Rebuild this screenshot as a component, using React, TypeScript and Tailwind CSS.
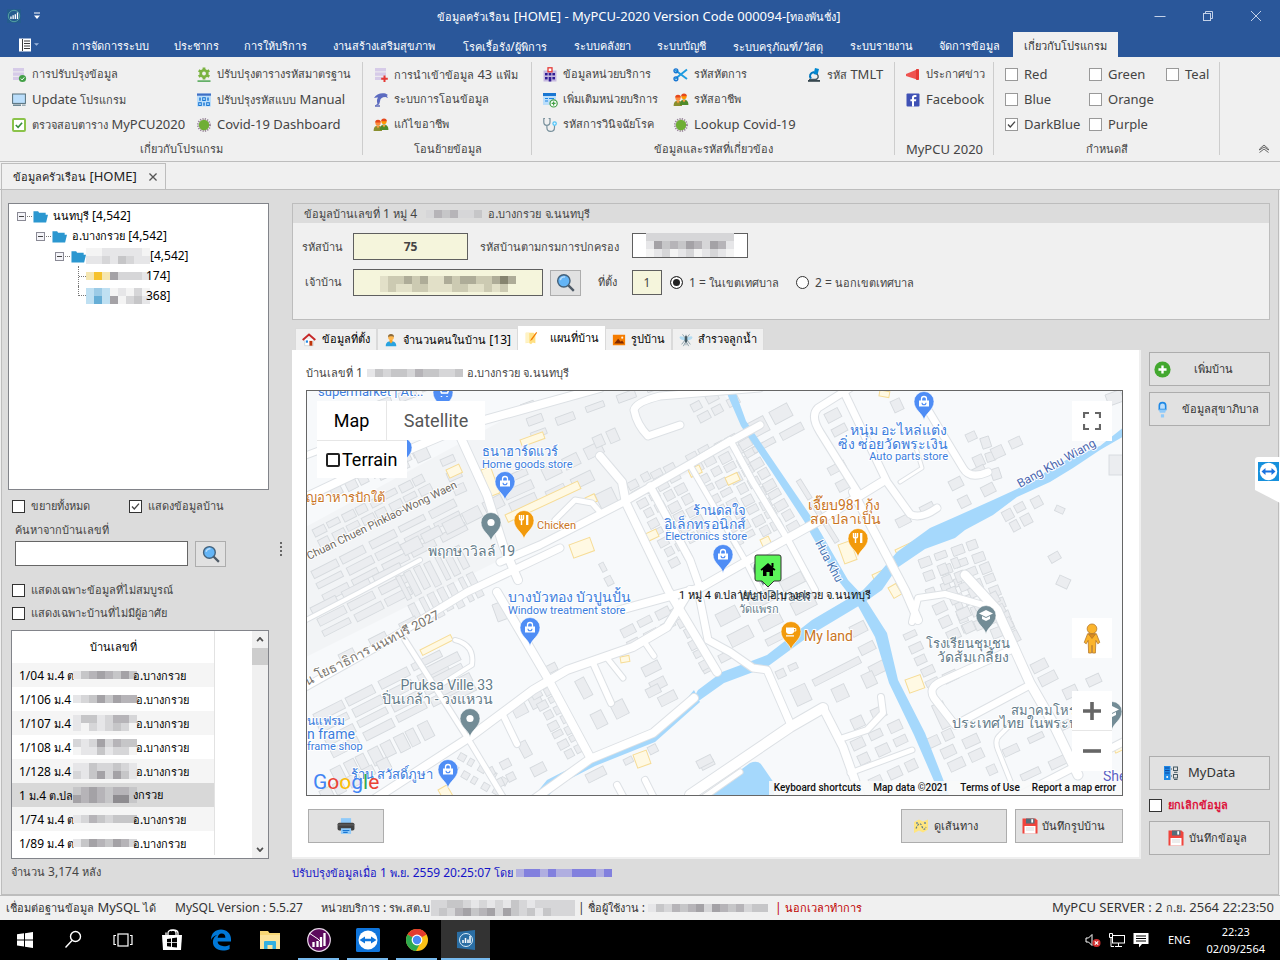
import React from "react";

type Kids = { children?: React.ReactNode };

/* ---------- small building blocks ---------- */

/* Mixed Thai and Latin text: Latin runs are set one step larger than the Thai around them. */
function T({ s, big }: { s: string; big?: boolean }) {
  return (
    <span className="whitespace-pre">
      {s.split(/([^\u0E00-\u0E7F]+)/).map((part, i) =>
        i % 2 ? <span key={i} className={big ? "text-[13px]" : "text-[12px]"}>{part}</span> : part,
      )}
    </span>
  );
}

function Mosaic({ rows, cell = 8, label }: { rows: string[]; cell?: number; label?: string }) {
  const palette: Record<string, string> = {
    a: "#f4f4f4", b: "#e6e6e8", c: "#d6d6d8", d: "#c6c6c8", e: "#b6b4b8", f: "#a4a2a6", g: "#8e8c90",
    y: "#f6c22c", z: "#f5e6b0", s: "#bfe0f2", t: "#66aed6", u: "#9ccbe6",
    k: "#e2e0c8", l: "#cccab2", m: "#aeac98", n: "#86846f",
    p: "#cfcde6", q: "#b0aee0", r: "#8280de",
  };
  const w = rows[0].length * cell;
  const h = rows.length * cell;
  return (
    <svg width={w} height={h} className="block shrink-0" role="img" aria-label={label ?? "hidden"} shapeRendering="crispEdges">
      {rows.flatMap((r, j) =>
        r.split("").map((c, i) =>
          palette[c] ? <rect key={`${i}-${j}`} x={i * cell} y={j * cell} width={cell} height={cell} fill={palette[c]} /> : null,
        ),
      )}
    </svg>
  );
}

function Check({ text, checked, big, border = "border-[#333]", className = "" }: { text: string; checked?: boolean; big?: boolean; border?: string; className?: string }) {
  return (
    <label className={`flex items-center gap-[6px] whitespace-nowrap ${className}`}>
      <span className="relative size-[13px] shrink-0">
        <input type="checkbox" defaultChecked={checked} className={`peer block size-[13px] appearance-none border bg-white ${border}`} />
        <svg viewBox="0 0 13 13" className="pointer-events-none absolute inset-0 hidden size-[13px] peer-checked:block">
          <path d="M3 6.5 5.3 9 10 3.6" fill="none" stroke="#444" strokeWidth="1.3" />
        </svg>
      </span>
      <T s={text} big={big} />
    </label>
  );
}

/* ---------- icons, 16 unit grid ---------- */

function Ico({ children, size = "size-4" }: Kids & { size?: string }) {
  return <svg viewBox="0 0 16 16" className={`${size} shrink-0`} aria-hidden="true">{children}</svg>;
}
const Rows = () => (
  <g fill="#d6cbe8"><rect x="2" y="1" width="11" height="3.4" /><rect x="2" y="5.4" width="11" height="3.4" /><rect x="2" y="9.8" width="11" height="3.2" /></g>
);
const Gear = ({ fill = "#7cb342" }: { fill?: string }) => (
  <g>
    <g stroke={fill} strokeWidth="2.8">
      <path d="M8 0.4V12.6M2.7 3.4l10.6 6.200M13.300 3.4l-10.600 6.200" />
    </g>
    <circle cx="8" cy="6.5" r="4.6" fill={fill} />
    <circle cx="8" cy="6.5" r="1.9" fill="#f0f0f0" />
  </g>
);
const icons = {
  rowsOk: <><Rows /><circle cx="11.5" cy="11.5" r="3.6" fill="#43a047" /><path d="M9.8 11.6l1.3 1.3 2.2-2.5" stroke="#fff" fill="none" /></>,
  rowsAdd: <><Rows /><path d="M11.5 8.5v6.6M8.2 11.8h6.6" stroke="#e53935" strokeWidth="2" /></>,
  monitor: <><rect x="1.6" y="2" width="12.8" height="9.4" fill="#bbdefb" stroke="#546e7a" /><path d="M2 13.2h8" stroke="#607d8b" strokeWidth="1.4" /><path d="M11 13.2h3.6" stroke="#90a4ae" strokeWidth="1.4" /></>,
  checkGreen: <><rect x="2" y="2" width="12" height="12" rx="1" fill="#fff" stroke="#8bc34a" strokeWidth="2" /><path d="M4.8 8l2.3 2.3 4-4.6" fill="none" stroke="#388e3c" strokeWidth="1.6" /></>,
  gear: <><Gear /><rect x="1.5" y="13.4" width="13" height="1.4" fill="#43a047" /></>,
  binary: <><rect x="1" y="1.5" width="14" height="13" fill="#bbdefb" /><rect x="1" y="1.5" width="14" height="2.2" fill="#3f6fc4" /><path d="M4 5.4v3.4M12 5.4v3.4M8 10.4v3.4" stroke="#1976d2" strokeWidth="1.4" /><rect x="6.7" y="5.7" width="2.6" height="2.8" fill="none" stroke="#1976d2" /><rect x="2.7" y="10.7" width="2.6" height="2.8" fill="none" stroke="#1976d2" /><rect x="10.7" y="10.7" width="2.6" height="2.8" fill="none" stroke="#1976d2" /></>,
  virus: <><circle cx="8" cy="8" r="6" fill="none" stroke="#9a869c" strokeWidth="2" strokeDasharray="1.2 1.16" /><circle cx="8" cy="8" r="5.200" fill="#6fae35" /></>,
  dolphin: <><path d="M1 6C3 2 8 .5 12.5 1.5L15 3l-1.2.8L15 6l-2.6-1C9 5 7 6.500 7 9.500l-1 3-4 1.200 2.400-2C3.600 9 4 7 5 5.600 3.600 5.400 2.200 5.600 1 6z" fill="#5c6bc0" /><path d="M2 14h5" stroke="#3949ab" strokeWidth="1.2" /></>,
  people: <><path d="M.6 14c0-4 2-5.600 4.400-5.600S9 10 9 14z" fill="#8a8f2e" /><path d="M7 13c0-4 1.800-5.400 4-5.400s4.400 1.400 4.400 5.400z" fill="#4e8a2a" /><circle cx="5" cy="5.900" r="2.600" fill="#ff8a3c" /><path d="M2.200 5.600a2.800 2.800 0 0 1 5.600 0z" fill="#e5481d" /><circle cx="11" cy="4.600" r="2.600" fill="#ff9800" /><path d="M8.200 4.200a2.800 2.800 0 0 1 5.600 0z" fill="#e5481d" /><path d="M3.400 9l1.600 2.400L6.600 9z" fill="#ff9c40" /><path d="M9.400 8l1.600 2.400L12.600 8z" fill="#ff9c40" /></>,
  clinic: <><rect x="1.500" y="3.500" width="13" height="11" fill="#c5b8e0" /><rect x="6" y=".8" width="4" height="4" fill="#fff" stroke="#e53935" strokeWidth="1.300" /><g fill="#311b92"><rect x="3" y="6" width="2.600" height="2.400" /><rect x="6.700" y="6" width="2.600" height="2.400" /><rect x="10.400" y="6" width="2.600" height="2.400" /><rect x="3" y="10" width="2.600" height="2.400" /><rect x="6.700" y="10" width="2.600" height="4.500" /><rect x="10.400" y="10" width="2.600" height="2.400" /></g></>,
  formAdd: <><rect x="1" y="1" width="13" height="12" fill="#bbdefb" /><rect x="1" y="1" width="13" height="3" fill="#1976d2" /><path d="M3 6.500h3M3 9h3M7 6.500h5" stroke="#1e88e5" strokeWidth="1.200" /><circle cx="11.600" cy="11.400" r="3.600" fill="#fff" stroke="#43a047" strokeWidth="1.200" /><path d="M11.600 9.400v4M9.600 11.400h4" stroke="#43a047" strokeWidth="1.300" /></>,
  stetho: <><path d="M3 1.500H1.800V5c0 2 1.200 3.400 3 3.400S8 7 8 5V1.500H6.600M4.900 8.400v2.200c0 2.400 1.400 3.800 3.600 3.800s4-1.600 4-4V8.500" fill="none" stroke="#78909c" strokeWidth="1.200" /><circle cx="12.600" cy="6.600" r="1.700" fill="#e1f5fe" stroke="#4fc3f7" strokeWidth="1.200" /></>,
  scissors: <><path d="M2 12 14 2.500M2 3l12 9" stroke="#1e9be0" strokeWidth="1.900" /><circle cx="2.900" cy="3.800" r="1.900" fill="none" stroke="#1976d2" strokeWidth="1.400" /><circle cx="2.900" cy="11.800" r="1.900" fill="none" stroke="#1976d2" strokeWidth="1.400" /></>,
  scope: <><path d="M9 1l4 1-1.500 6-4-1z" fill="#0288d1" /><path d="M11 7c2 2 1.600 5-1.500 5.500M3 12.500h8" stroke="#455a64" strokeWidth="1.400" fill="none" /><rect x="2" y="13" width="12" height="1.800" fill="#37474f" /><path d="M8 5C4 6 3 9 5 11.500" fill="none" stroke="#0277bd" strokeWidth="2" /></>,
  horn: <><path d="M1 7 12 2.500v10L1 9z" fill="#ef5350" /><rect x="11" y="2" width="3" height="11" rx=".8" fill="#e53935" /></>,
  facebook: <><rect x="1.500" y="1.500" width="13" height="13" rx="1" fill="#3f51b5" /><path d="M9 14.500V9.300h2l.3-2H9V6c0-.7.300-1.100 1.200-1.100h1.200V3.100C11 3 10.400 3 9.800 3 8 3 7 4 7 5.800v1.500H5.400v2H7v5.200z" fill="#fff" /></>,
  house: <><path d="M3 7v7.500h10V7" fill="#fff" stroke="#cfd8dc" /><path d="M.8 8 8 1.800 15.200 8" fill="none" stroke="#c62828" strokeWidth="2.200" /><rect x="8.500" y="9" width="3.400" height="5.500" fill="#bf360c" /><rect x="4.400" y="8.500" width="2.400" height="2.600" fill="#1e88e5" /></>,
  person: <><circle cx="8" cy="5" r="3.200" fill="#ffb74d" /><path d="M4.600 5C4 0 12 0 11.400 5 10.500 3.400 6 3.400 4.600 5z" fill="#8a6a3c" /><path d="M2 15c0-4 2.500-5.500 6-5.500s6 1.500 6 5.500z" fill="#29a3e0" /><path d="M6.300 8h3.400v2L8 12l-1.700-2z" fill="#ffa726" /></>,
  note: <><path d="M2 2h9l2 2v10l-3-1-2 2-3-2-3 1z" fill="#ffe082" /><path d="M2 2h4v12l-2-1-2 1z" fill="#fff3c4" /><path d="M14 1 8 9l-1 2.500L9.400 10 15 2z" fill="#f57c00" /></>,
  photo: <><rect x="1" y="2" width="14" height="12" fill="#f57c00" /><path d="M2.500 12 7 6.500l3 3.500 1.500-1.500 2.500 3.500z" fill="#7f2a00" /><circle cx="11.700" cy="5.300" r="1.200" fill="#fff3e0" /></>,
  bug: <><ellipse cx="4" cy="6" rx="3.600" ry="1.800" fill="#b3dcf2" transform="rotate(25 4 6)" /><ellipse cx="12" cy="6" rx="3.600" ry="1.800" fill="#b3dcf2" transform="rotate(-25 12 6)" /><path d="M8 2v12M4 1.500l3 4M12 1.500l-3 4M3 13l4-5M13 13 9 8M5 15l2-4M11 15l-2-4" stroke="#78909c" strokeWidth=".9" /><ellipse cx="8" cy="7" rx="1.500" ry="4" fill="#455a64" /></>,
  search: <><path d="M10 10l5 5" stroke="#4e5a66" strokeWidth="2" /><circle cx="6.600" cy="6.600" r="5.200" fill="#64b5f6" stroke="#44617a" strokeWidth="1.200" /><path d="M3.600 6a3.400 3.400 0 0 1 4-2.600" stroke="#bbdefb" strokeWidth="1.200" fill="none" /></>,
  printer: <><rect x="3.500" y="1" width="9" height="5" fill="#90caf9" /><rect x=".5" y="5" width="15" height="7" rx="1.500" fill="#424242" /><path d="M1 7h14" stroke="#616161" /><rect x="3.500" y="10" width="9" height="5" fill="#90caf9" /><path d="M5 12h6M5.500 13.700h4" stroke="#1976d2" strokeWidth="1" /></>,
  route: <><path d="M1 4l5-2.500 4 2 5-2v10l-5 3-4-2-5 2.500z" fill="#ffe57f" /><path d="M3 10.500c3-7 5-5 6-2s3 4 4 .5" stroke="#607d8b" strokeWidth="1.200" fill="none" strokeDasharray="2 1.200" /><circle cx="4" cy="5" r="1" fill="#78909c" /><circle cx="12" cy="5" r="1.100" fill="#78909c" /></>,
  floppy: <><path d="M.5.5h13l2 2v13H.5z" fill="#f0443c" /><rect x="4" y=".5" width="8.500" height="5" fill="#546e7a" /><rect x="9.300" y="1.200" width="1.800" height="3.400" fill="#fff" /><rect x="2.500" y="8" width="11" height="7.500" fill="#fff" /><path d="M4 10h8M4 12h8" stroke="#cfcfcf" strokeWidth=".8" /></>,
  plus: <><circle cx="8" cy="8" r="7.600" fill="#43a82f" /><path d="M8 4.200v7.600M4.200 8h7.600" stroke="#fff" strokeWidth="2.200" /></>,
  tap: <><path d="M5 8V4.500a3 3 0 0 1 6 0V8z" fill="#bbdefb" stroke="#1e88e5" strokeWidth="1.500" /><path d="M4.500 8h7l-1 3h-5z" fill="#90caf9" /><rect x="6.500" y="12.500" width="3" height="3" fill="#90caf9" /></>,
  server: <><rect x="1" y="1" width="6.500" height="14" fill="#1e88e5" /><path d="M2 3h4.500M2 5.500h4.500M2 8h4.500" stroke="#0d47a1" strokeWidth="1.200" /><circle cx="4.200" cy="12" r="1" fill="#fff" /><g fill="none" stroke="#455a64"><rect x="10.500" y="2" width="4" height="3.500" /><rect x="10.500" y="9.500" width="4" height="3.500" /><path d="M8 4h1M8 11h1M11 7.300h3.500M11 14.500h3.500" /></g></>,
  folder: <><path d="M.5 2.500h5l1 1.500h7v2H16l-2 8.500H.5z" fill="#2b97d0" /></>,
  appChart: <><rect width="16" height="16" fill="#245c8e" /><circle cx="8" cy="8" r="6.500" fill="none" stroke="#5aa9a4" /><path d="M4.500 11.500V8.500M7 11.500V7M9.500 11.500V6M12 11.500V4" stroke="#fff" strokeWidth="1.500" /></>,
} as const;
type IconName = keyof typeof icons;

/* ---------- title and ribbon ---------- */

function TitleBar() {
  return (
    <header className="flex h-8 items-center bg-[#2a579a] text-white">
      <div className="flex w-[120px] items-center gap-2 pl-[7px]">
        <Ico size="size-[14px]">{icons.appChart}</Ico>
        <button aria-label="Customize" className="grid size-4 place-items-center">
          <svg viewBox="0 0 8 8" className="size-2"><path d="M1 1h6" stroke="#fff" /><path d="M1 3.500h6L4 7z" fill="#fff" /></svg>
        </button>
      </div>
      <h1 className="flex-1 pl-[22px] text-center text-[11px] leading-8"><T big s="ข้อมูลครัวเรือน [HOME] - MyPCU-2020 Version Code 000094-[ทองพันชั่ง]" /></h1>
      <div className="flex">
        {[
          ["Minimize", <path key="m" d="M.5 6.500h11" />],
          ["Restore", <g key="r"><rect x="1.500" y="3.500" width="7" height="7" /><path d="M3.500 3.500v-2h7v7h-2" /></g>],
          ["Close", <path key="c" d="M1 1l10 10M11 1 1 11" />],
        ].map(([n, g]) => (
          <button key={n as string} aria-label={n as string} className="grid h-8 w-12 place-items-center">
            <svg viewBox="0 0 12 12" className="size-3" fill="none" stroke="#c3d1e8">{g}</svg>
          </button>
        ))}
      </div>
    </header>
  );
}

const menu: [string, string][] = [
  ["การจัดการระบบ", "w-[101px]"],
  ["ประชากร", "w-[71px]"],
  ["การให้บริการ", "w-[87px]"],
  ["งานสร้างเสริมสุขภาพ", "w-[130px]"],
  ["โรคเรื้อรัง/ผู้พิการ", "w-[112px]"],
  ["ระบบคลังยา", "w-[83px]"],
  ["ระบบบัญชี", "w-[75px]"],
  ["ระบบครุภัณฑ์/วัสดุ", "w-[118px]"],
  ["ระบบรายงาน", "w-[88px]"],
  ["จัดการข้อมูล", "w-[88px]"],
  ["เกี่ยวกับโปรแกรม", "w-[105px]"],
];

function MenuTabs() {
  return (
    <nav className="flex h-[25px] bg-[#2a579a] text-[11px] text-white">
      <button aria-label="File" className="flex w-[60px] items-center gap-0.5 pl-[18px]">
        <svg viewBox="0 0 14 14" className="size-[14px]"><rect x="1" y=".5" width="12" height="13" fill="#fff" /><path d="M4.500 1v12M6 3h6M6 5.500h6M6 8h6M6 10.500h6" stroke="#3a3a3a" /></svg>
        <svg viewBox="0 0 6 4" className="h-1 w-[5px]"><path d="M0 0h6L3 3z" fill="#9db6dc" /></svg>
      </button>
      {menu.map(([t, w], i) => (
        <button key={t} className={`${w} pt-1 text-center whitespace-nowrap ${i === 10 ? "bg-[#f0f0f0] text-[#333]" : ""}`}><T s={t} /></button>
      ))}
    </nav>
  );
}

function RItem({ icon, text }: { icon: IconName; text: string }) {
  return (
    <button className="flex h-[25px] items-center gap-[5px] text-left whitespace-nowrap">
      <Ico>{icons[icon]}</Ico>
      <T big s={text} />
    </button>
  );
}
function RGroup({ title, width, pad, children }: Kids & { title: string; width: string; pad: string }) {
  return (
    <section className={`relative flex shrink-0 flex-col pt-[5px] ${width}`}>
      <div className={`flex h-[75px] ${pad}`}>{children}</div>
      <h2 className="h-6 text-center leading-6"><T big s={title} /></h2>
      <span className="absolute top-[5px] right-0 h-[93px] border-r border-[#cdcdcd]" />
    </section>
  );
}
function Col({ width = "", children }: Kids & { width?: string }) {
  return <div className={`flex flex-col ${width}`}>{children}</div>;
}

function Ribbon() {
  const cb = { className: "h-[25px]", border: "border-[#999]", big: true };
  return (
    <div className="flex border-b border-[#bdbdbd] bg-[#f0f0f0] text-[11px] text-[#444]">
      <RGroup title="เกี่ยวกับโปรแกรม" width="w-[363px]" pad="pl-[11px]">
        <Col width="w-[185px]">
          <RItem icon="rowsOk" text="การปรับปรุงข้อมูล" />
          <RItem icon="monitor" text="Update โปรแกรม" />
          <RItem icon="checkGreen" text="ตรวจสอบตาราง MyPCU2020" />
        </Col>
        <Col>
          <RItem icon="gear" text="ปรับปรุงตารางรหัสมาตรฐาน" />
          <RItem icon="binary" text="ปรับปรุงรหัสแบบ Manual" />
          <RItem icon="virus" text="Covid-19 Dashboard" />
        </Col>
      </RGroup>
      <RGroup title="โอนย้ายข้อมูล" width="w-[169px]" pad="pl-[10px]">
        <Col>
          <RItem icon="rowsAdd" text="การนำเข้าข้อมูล 43 แฟ้ม" />
          <RItem icon="dolphin" text="ระบบการโอนข้อมูล" />
          <RItem icon="people" text="แก้ไขอาชีพ" />
        </Col>
      </RGroup>
      <RGroup title="ข้อมูลและรหัสที่เกี่ยวข้อง" width="w-[363px]" pad="pl-[10px]">
        <Col width="w-[131px]">
          <RItem icon="clinic" text="ข้อมูลหน่วยบริการ" />
          <RItem icon="formAdd" text="เพิ่มเติมหน่วยบริการ" />
          <RItem icon="stetho" text="รหัสการวินิจฉัยโรค" />
        </Col>
        <Col width="w-[133px]">
          <RItem icon="scissors" text="รหัสหัตการ" />
          <RItem icon="people" text="รหัสอาชีพ" />
          <RItem icon="virus" text="Lookup Covid-19" />
        </Col>
        <Col>
          <RItem icon="scope" text="รหัส TMLT" />
        </Col>
      </RGroup>
      <RGroup title="MyPCU 2020" width="w-[99px]" pad="pl-[10px]">
        <Col>
          <RItem icon="horn" text="ประกาศข่าว" />
          <RItem icon="facebook" text="Facebook" />
        </Col>
      </RGroup>
      <RGroup title="กำหนดสี" width="w-[226px]" pad="pl-[11px]">
        <Col width="w-[84px]">
          <Check {...cb} text="Red" />
          <Check {...cb} text="Blue" />
          <Check {...cb} text="DarkBlue" checked />
        </Col>
        <Col width="w-[77px]">
          <Check {...cb} text="Green" />
          <Check {...cb} text="Orange" />
          <Check {...cb} text="Purple" />
        </Col>
        <Col>
          <Check {...cb} text="Teal" />
        </Col>
      </RGroup>
      <button aria-label="Collapse ribbon" className="mr-[10px] mb-[7px] ml-auto self-end">
        <svg viewBox="0 0 12 10" className="h-[10px] w-3" fill="none" stroke="#666"><path d="M1.500 5 6 1l4.500 4v1L6 3 1.500 6zM1.500 8.500 6 5l4.500 3.500" /></svg>
      </button>
    </div>
  );
}

/* ---------- left panel ---------- */

function TreeRow({ pad, box, children }: Kids & { pad: string; box?: boolean }) {
  return (
    <li className={`flex h-5 items-center whitespace-nowrap ${pad}`}>
      {box && (
        <>
          <svg viewBox="0 0 9 9" className="size-[9px] shrink-0"><rect x=".5" y=".5" width="8" height="8" fill="#f3f3f8" stroke="#8a8a95" /><path d="M2 4.500h5" stroke="#444" /></svg>
          <span className="mr-px ml-px w-[5px] border-t border-dotted border-[#777]" />
          <Ico size="size-[15px]">{icons.folder}</Ico>
        </>
      )}
      {children}
    </li>
  );
}

const houses: [string, string, string[], boolean?][] = [
  ["1/04 ม.4 ต", "อ.บางกรวย", ["bdefedfd"]],
  ["1/106 ม.4", " อ.บางกรวย", ["bcdfdfee"]],
  ["1/107 ม.4", " อ.บางกรวย", ["bddbceec", "bacbcdca"]],
  ["1/108 ม.4", " อ.บางกรวย", ["cbcfcedd", "abbdbcca"]],
  ["1/128 ม.4", " อ.บางกรวย", ["bbdccdcb", "cbdfcfdb"]],
  ["1 ม.4 ต.ปล", "งกรวย", ["defedeed", "fefedggd"], true],
  ["1/74 ม.4 ต", "อ.บางกรวย", ["bcedcddd"]],
  ["1/89 ม.4 ต", "อ.บางกรวย", ["bdfedfec"]],
];

function LeftPanel() {
  return (
    <aside className="flex w-[261px] shrink-0 flex-col text-[11px]">
      <ul className="min-h-[200px] flex-1 border border-[#82848a] bg-white pt-[2px] text-black">
        <TreeRow pad="pl-2" box><span className="pl-[5px]"><T s="นนทบุรี [4,542]" /></span></TreeRow>
        <TreeRow pad="pl-[27px]" box><span className="pl-[5px]"><T s="อ.บางกรวย [4,542]" /></span></TreeRow>
        <TreeRow pad="pl-[46px]" box><Mosaic rows={["aabbbbba", "bbcbdcbb"]} /><T s="[4,542]" /></TreeRow>
        <TreeRow pad="pl-[69px]">
          <span className="h-full w-[8px] border-l border-dotted border-[#777] pt-[10px]"><span className="block border-t border-dotted border-[#777]" /></span>
          <Mosaic rows={["zyzfcccb"]} /><span className="-ml-1"><T s="174]" /></span>
        </TreeRow>
        <TreeRow pad="pl-[69px]">
          <span className="h-full w-[8px]"><span className="block h-[10px] border-b border-l border-dotted border-[#777]" /></span>
          <Mosaic rows={["susabaca", "stsfacdb"]} /><span className="-ml-1"><T s="368]" /></span>
        </TreeRow>
      </ul>
      <div className="flex h-8 items-center pl-1">
        <Check className="w-[117px]" text="ขยายทั้งหมด" />
        <Check checked text="แสดงข้อมูลบ้าน" />
      </div>
      <label htmlFor="find" className="h-4 pl-[7px] leading-4">ค้นหาจากบ้านเลขที่</label>
      <div className="mt-[3px] flex items-start gap-[7px] pl-[7px]">
        <input id="find" className="h-[25px] w-[173px] border border-[#666] bg-white px-1 text-[12px]" />
        <button aria-label="Search" className="grid h-[26px] w-[31px] place-items-center border border-[#adadad] bg-[#e1e1e1]"><Ico size="size-[18px]">{icons.search}</Ico></button>
      </div>
      <div className="mt-3 pl-1">
        <Check className="h-[23px]" text="แสดงเฉพาะข้อมูลที่ไม่สมบูรณ์" />
        <Check className="h-[23px]" text="แสดงเฉพาะบ้านที่ไม่มีผู้อาศัย" />
      </div>
      <div className="mt-[5px] ml-[3px] flex justify-between border border-[#82848a] bg-white text-black">
        <table className="mb-[3px] w-[203px] border-collapse">
          <thead>
            <tr><th className="h-8 border-r border-[#e2e2e2] font-normal">บ้านเลขที่</th></tr>
          </thead>
          <tbody>
            {houses.map(([a, b, m, sel], i) => (
              <tr key={a} className={sel ? "bg-[#d8d8d8]" : i % 2 ? "bg-white" : "bg-[#f5f5f5]"}>
                <td className="h-6 border-r border-[#e2e2e2] p-0 pl-[7px]">
                  <div className="flex h-6 items-center">
                    <span className="w-[54px] pt-px"><T s={a} /></span>
                    <Mosaic rows={m} />
                    <span className="-ml-1 pt-px"><T s={b} /></span>
                  </div>
                </td>
              </tr>
            ))}
          </tbody>
        </table>
        <div className="flex w-4 flex-col items-center bg-[#f0f0f0]">
          <svg viewBox="0 0 9 6" className="my-[6px] h-[5px] w-2" fill="none" stroke="#505050" strokeWidth="2"><path d="M1 5l3.500-4L8 5" /></svg>
          <span className="h-[17px] w-full bg-[#cdcdcd]" />
          <svg viewBox="0 0 9 6" className="mt-auto mb-[6px] h-[5px] w-2" fill="none" stroke="#505050" strokeWidth="2"><path d="M1 1l3.500 4L8 1" /></svg>
        </div>
      </div>
      <p className="h-[35px] pl-[3px] leading-[26px]"><T s="จำนวน 3,174 หลัง" /></p>
    </aside>
  );
}

/* ---------- map ---------- */

const roads: { d: string; w: number }[] = [
  { d: "M300 500 L380 462 L470 424 L600 388", w: 8 },
  { d: "M307 455 L400 420", w: 6 },
  { d: "M460 436 L487 495 L503 545 L518 580", w: 8 },
  { d: "M497 592 L547 677 L590 757", w: 8 },
  { d: "M300 690 L380 645 L467 592 L560 548", w: 7 },
  { d: "M500 562 L540 545 L622 503 L720 447 L760 425", w: 7 },
  { d: "M555 520 L575 500 L592 503 L600 512", w: 5 },
  { d: "M600 456 L622 482 L626 503 L668 590 L717 672", w: 8 },
  { d: "M650 486 L690 560 L700 588", w: 7 },
  { d: "M690 465 L745 560 L760 590", w: 5 },
  { d: "M700 458 L730 440 L753 482 L788 540 L815 590", w: 6 },
  { d: "M680 425 L648 436 Q637 425 634 410 Q636 402 660 396 L760 388", w: 7 },
  { d: "M620 610 L700 588 L763 552 L817 522 L882 482", w: 8 },
  { d: "M850 388 L818 408 Q810 416 820 432 L860 496", w: 7 },
  { d: "M853 492 L905 590 L918 620", w: 8 },
  { d: "M842 388 L887 482 L910 514 Q920 520 937 508", w: 7 },
  { d: "M925 405 L963 468 Q970 480 988 472", w: 7 },
  { d: "M900 482 L922 468 L916 448", w: 3 },
  { d: "M700 600 L708 640 L730 652 L753 668 L767 670 L790 723", w: 7 },
  { d: "M373 800 L470 737 L533 690 L567 670 L633 647 L667 627 L690 590", w: 8 },
  { d: "M533 800 L590 759 L653 733 L694 698", w: 8 },
  { d: "M690 795 L790 727 L823 708", w: 10 },
  { d: "M823 708 L843 747 L862 800", w: 8 },
  { d: "M843 738 L867 730 L883 713 L881 697", w: 6 },
  { d: "M850 773 L912 750", w: 5 },
  { d: "M912 622 L918 598 L945 594 L983 605", w: 6 },
  { d: "M965 575 L997 610 L1030 683 L1053 723 L1078 775", w: 9 },
  { d: "M1030 685 L955 725 L934 698 Q928 688 940 682 L1015 648", w: 7 },
  { d: "M1020 795 L1123 742", w: 7 },
  { d: "M1010 725 L1000 735 Q994 740 998 750 L1012 785", w: 4 },
  { d: "M503 715 L517 744", w: 6 },
  { d: "M593 663 L611 703", w: 6 },
  { d: "M607 658 L623 678", w: 5 },
  { d: "M643 640 L654 656", w: 5 },
  { d: "M700 800 L740 772", w: 5 },
  { d: "M306 620 L360 592 L420 560", w: 4 },
  { d: "M405 640 L470 742 L505 800", w: 5 },
  { d: "M455 640 Q475 645 472 665 L440 685", w: 4 },
  { d: "M617 785 L625 800 M645 780 L655 800", w: 6 },
];

/* x, y, angle, columns, rows, width, height, step x, step y */
const blocks: number[][] = [
  [312, 530, -27, 8, 2, 13, 8, 16, 12],
  [330, 490, -27, 7, 1, 11, 10, 15, 12],
  [310, 572, -27, 5, 3, 28, 8, 33, 13],
  [310, 608, -27, 3, 3, 30, 8, 35, 13],
  [400, 545, -27, 5, 1, 20, 12, 23, 15],
  [400, 575, 63, 2, 7, 26, 7, 30, -11],
  [312, 715, -27, 4, 4, 32, 9, 37, 13],
  [338, 655, -27, 3, 1, 18, 9, 34, 13],
  [425, 668, -27, 1, 4, 36, 9, 40, 12],
  [330, 770, -27, 8, 1, 11, 17, 14, 20],
  [318, 792, -27, 5, 1, 12, 12, 16, 15],
  [375, 402, -20, 3, 1, 18, 9, 24, 12],
  [412, 425, -20, 2, 1, 14, 10, 50, 12],
  [440, 460, -24, 1, 3, 14, 9, 20, 15],
  [375, 470, -25, 3, 1, 14, 12, 21, 15],
  [520, 405, -20, 1, 3, 16, 8, 22, 15],
  [555, 418, -20, 5, 1, 19, 8, 32, 14],
  [498, 480, -24, 1, 3, 30, 9, 36, 13],
  [540, 470, -26, 3, 1, 18, 12, 24, 15],
  [545, 492, -26, 2, 1, 22, 11, 28, 15],
  [595, 495, -26, 1, 1, 18, 16, 24, 15],
  [592, 438, -24, 2, 1, 10, 13, 14, 15],
  [635, 478, 62, 9, 2, 8, 10, 11, -14],
  [660, 468, 62, 7, 2, 9, 11, 12, -14],
  [695, 451, 62, 9, 2, 8, 11, 12, -14],
  [722, 440, 62, 9, 2, 9, 11, 12, -14],
  [748, 436, 60, 9, 1, 9, 12, 12, -14],
  [690, 405, -28, 3, 2, 12, 8, 17, 13],
  [745, 425, -28, 2, 1, 20, 16, 27, 18],
  [752, 448, -28, 2, 1, 24, 8, 30, 12],
  [823, 415, -28, 1, 2, 15, 10, 20, 17],
  [843, 460, 62, 2, 1, 10, 18, 17, 14],
  [890, 402, -25, 1, 1, 10, 12, 17, 14],
  [965, 435, -25, 1, 1, 10, 10, 17, 14],
  [988, 435, 72, 3, 1, 11, 9, 17, 14],
  [972, 458, -25, 3, 1, 12, 11, 20, 14],
  [948, 482, -27, 2, 2, 13, 10, 26, 20],
  [895, 520, -27, 2, 1, 14, 11, 26, 14],
  [800, 478, 58, 3, 1, 22, 5, 26, 10],
  [1030, 500, -28, 1, 1, 12, 10, 26, 14],
  [1010, 508, 62, 2, 2, 10, 10, 13, -14],
  [1057, 505, 25, 1, 1, 9, 8, 13, 14],
  [1047, 557, -30, 1, 1, 11, 8, 13, 14],
  [1060, 575, 25, 1, 1, 14, 10, 13, 14],
  [918, 560, -20, 4, 2, 12, 9, 17, 14],
  [925, 590, -20, 3, 1, 9, 8, 15, 12],
  [945, 562, 68, 6, 2, 10, 9, 13, -13],
  [975, 566, 68, 6, 2, 10, 10, 13, -14],
  [932, 606, -25, 3, 3, 13, 10, 19, 15],
  [903, 635, -25, 1, 5, 13, 8, 19, 13],
  [995, 590, 62, 4, 1, 11, 14, 15, 14],
  [1030, 665, -27, 1, 2, 18, 10, 19, 15],
  [1062, 690, -25, 2, 1, 14, 11, 26, 14],
  [942, 675, -25, 1, 1, 14, 12, 26, 14],
  [942, 700, 65, 1, 1, 26, 12, 26, 14],
  [940, 750, -25, 2, 2, 16, 10, 24, 15],
  [1002, 750, -25, 3, 1, 16, 8, 28, 15],
  [1020, 775, -25, 2, 1, 20, 9, 30, 15],
  [985, 768, -25, 1, 1, 9, 9, 30, 15],
  [715, 615, -27, 3, 2, 24, 13, 36, 24],
  [700, 665, -27, 2, 1, 14, 10, 20, 14],
  [765, 640, -27, 1, 1, 24, 9, 20, 14],
  [848, 628, -27, 1, 3, 16, 11, 20, 22],
  [790, 690, -25, 1, 1, 18, 18, 20, 14],
  [775, 672, -25, 2, 1, 9, 8, 14, 14],
  [812, 680, -27, 1, 1, 52, 9, 14, 14],
  [830, 690, -25, 2, 1, 14, 14, 34, 14],
  [850, 720, -25, 2, 1, 14, 11, 22, 14],
  [850, 742, -25, 3, 2, 13, 10, 20, 16],
  [868, 780, -25, 3, 1, 13, 10, 20, 16],
  [925, 740, -25, 2, 1, 12, 10, 18, 16],
  [700, 765, -27, 1, 1, 16, 6, 18, 16],
  [620, 630, -27, 3, 2, 14, 9, 19, 14],
  [543, 668, -27, 1, 1, 13, 10, 19, 14],
  [583, 676, 62, 1, 1, 20, 10, 24, 14],
  [590, 715, -27, 2, 1, 14, 16, 22, 14],
  [641, 668, -27, 1, 3, 18, 10, 22, 17],
  [645, 690, -27, 1, 1, 14, 11, 22, 17],
  [510, 708, -27, 2, 1, 14, 12, 20, 17],
  [540, 690, 62, 7, 2, 8, 10, 11, -13],
  [525, 740, 62, 1, 1, 16, 9, 11, -13],
  [530, 768, -27, 1, 1, 14, 12, 22, 17],
  [460, 752, 30, 5, 2, 7, 7, 12, 14],
  [485, 770, -27, 2, 2, 10, 8, 16, 14],
  [585, 775, -27, 1, 1, 20, 9, 18, 16],
  [623, 760, -27, 2, 1, 9, 8, 26, 16],
  [695, 762, -27, 1, 1, 16, 8, 18, 16],
  [680, 605, 62, 6, 1, 9, 11, 12, 14],
  [492, 605, -20, 1, 1, 12, 18, 18, 16],
  [603, 562, 62, 2, 1, 9, 7, 14, 16],
  [1108, 455, 0, 1, 1, 20, 20, 18, 16],
  [1105, 395, -20, 1, 1, 18, 12, 18, 16],
];

const shops: number[][] = [
  [481, 470, 10, 28, -20], [520, 440, 24, 7, -20], [446, 470, 14, 9, -25], [505, 515, 80, 8, -25],
  [585, 498, 10, 8, -25], [688, 470, 12, 8, -25], [643, 535, 14, 8, -25], [569, 545, 22, 14, -20],
  [725, 478, 13, 8, -25], [760, 540, 9, 12, -25], [838, 545, 13, 20, -20], [895, 550, 22, 7, -25],
  [872, 575, 12, 8, -25], [888, 588, 9, 12, -30], [905, 680, 16, 14, -20], [420, 650, 34, 6, -27],
  [620, 657, 9, 6, -10], [633, 755, 14, 14, -20], [1112, 745, 16, 9, -25], [438, 790, 10, 14, -30],
  [880, 390, 10, 6, 10],
];

const pinColors = { blue: "#4f8df5", grey: "#738c96", orange: "#f29a0c" } as const;

function Pin({ x, y, tone, glyph }: { x: number; y: number; tone: keyof typeof pinColors; glyph: "bag" | "dot" | "food" | "cup" | "cap" | "cart" }) {
  return (
    <g transform={`translate(${x} ${y})`}>
      <path d="M0 0 C-1.500 -7 -10 -10 -10 -18.500 A10 10 0 0 1 10 -18.500 C10 -10 1.500 -7 0 0z" fill={pinColors[tone]} stroke="#fff" strokeWidth=".6" />
      {glyph === "dot" && <circle cy="-18.500" r="3.600" fill="#fff" />}
      {glyph === "bag" && <g><path d="M-5 -19.500h10v6h-10z" fill="#fff" /><path d="M-2.500 -19v-2a2.500 2.500 0 0 1 5 0v2" fill="none" stroke="#fff" strokeWidth="1.300" /><path d="M-2 -17.300a2 2 0 0 0 4 0" fill="none" stroke="#4f8df5" strokeWidth="1.100" /></g>}
      {glyph === "food" && <g stroke="#fff" fill="none"><path d="M-4.500 -24v3.500c0 2 4 2 4 0V-24M-2.500 -24v10" strokeWidth="1.400" /><path d="M3.200 -24v10" strokeWidth="2.300" /></g>}
      {glyph === "cup" && <g><path d="M-5 -22.500h8v4.500a3 3 0 0 1-3 2h-2a3 3 0 0 1-3-2zM-5 -14.800h8v1.300h-8z" fill="#fff" /><path d="M3 -21.500h1.800v2.500H3" fill="none" stroke="#fff" /></g>}
      {glyph === "cap" && <g fill="#fff"><path d="M-7 -20.500 0 -24l7 3.500-7 3.500z" /><path d="M-4 -18v3l4 2 4-2v-3l-4 2z" /></g>}
      {glyph === "cart" && <path d="M-6 -24h2.500l2 6h6l1.500-4h-8M-1.500 -15v1M4 -15v1" fill="none" stroke="#fff" strokeWidth="1.500" />}
    </g>
  );
}

const B = "#3b7ddd";
const G = "#627a88";
const O = "#c9751f";
type Label = [number, number, string, string, number, ("start" | "end")?, number?];
const labels: Label[] = [
  [318, 396, "supermarket | At...", B, 13],
  [482, 456, "ธนาฮาร์ดแวร์", B, 13],
  [482, 468, "Home goods store", B, 11],
  [306, 502, "ญอาหารปักใต้", O, 13],
  [309, 560, "Chuan Chuen Pinklao-Wong Waen", "#6d675e", 11, "start", -26],
  [537, 529, "Chicken", O, 11],
  [428, 556, "พฤกษาวิลล์ 19", G, 14],
  [746, 515, "ร้านดลใจ", B, 13, "end"],
  [746, 529, "อิเล็กทรอนิกส์", B, 14, "end"],
  [747, 540, "Electronics store", B, 11, "end"],
  [947, 435, "หนุ่ม อะไหล่แต่ง", B, 14, "end"],
  [948, 449, "ซิ่ง ซ่อยวัดพระเงิน", B, 14, "end"],
  [948, 460, "Auto parts store", B, 11, "end"],
  [880, 510, "เจี๊ยบ981 กุ้ง", O, 14, "end"],
  [881, 524, "สด ปลาเป็น", O, 14, "end"],
  [815, 543, "Hua Khu", "#4a76b4", 12, "start", 62],
  [1020, 488, "Bang Khu Wiang", "#4a66b0", 12, "start", -29],
  [508, 602, "บางบัวทอง บัวปูนปั้น", B, 14],
  [508, 614, "Window treatment store", B, 11],
  [307, 686, "น โยธาธิการ นนทบุรี 2027", "#77736c", 13, "start", -27],
  [493, 690, "Pruksa Ville 33", G, 14, "end"],
  [493, 704, "ปิ่นเกล้า - วงแหวน", G, 14, "end"],
  [307, 725, "นแฟรม", B, 12],
  [307, 739, "n frame", B, 14],
  [307, 750, "frame shop", B, 11],
  [351, 779, "ร้าน สวัสดิ์ภูษา", B, 13],
  [804, 641, "My land", O, 14],
  [739, 601, "Wat Phraek", G, 14],
  [739, 613, "วัดแพรก", G, 11],
  [1010, 648, "โรงเรียนชุมชน", G, 13, "end"],
  [1009, 662, "วัดส้มเกลี้ยง", G, 14, "end"],
  [1011, 715, "สมาคมโหร", G, 13],
  [952, 728, "ประเทศไทย ในพระบ", G, 14],
  [1103, 781, "She", "#5b62c4", 14],
];

function MapArt() {
  return (
    <svg viewBox="307 391 815 404" preserveAspectRatio="xMidYMid slice" className="absolute inset-0 size-full" role="img" aria-label="Map">
      <rect x="200" y="300" width="1100" height="600" fill="#f7f9fb" />
      <path d="M300 530 L540 400 L610 390 L720 390 L760 440 L500 560 L300 660z" fill="#f2f4f6" />
      <g fill="#ebedf0" stroke="#d6dade" strokeWidth=".9">
        {blocks.map(([x, y, a, c, r, w, h, sx, sy], k) => (
          <g key={k} transform={`translate(${x} ${y}) rotate(${a})`}>
            {Array.from({ length: c * r }, (_, n) => {
              const i = n % c;
              const j = Math.floor(n / c);
              const cut = (i * 7 + j * 5 + k * 3) % 4;
              return <rect key={n} x={i * sx + (cut === 2 ? 1 : 0)} y={j * sy} width={w - (cut === 1 ? 2 : 0)} height={h - (cut === 3 ? 2 : 0)} />;
            })}
          </g>
        ))}
      </g>
      <g fill="#fff9e3" stroke="#f6dc96">
        {shops.map(([x, y, w, h, a]) => (
          <rect key={`${x}-${y}`} x={x} y={y} width={w} height={h} transform={`rotate(${a} ${x} ${y})`} />
        ))}
      </g>
      <g fill="#a5d8fc">
        <path d="M726 388 h8 L746 421 L780 471 L812 518 L821 533 L848 580 L864 597 L887 633 L898 680 L925 733 L950 797 h-9 L914 735 L889 683 L875 637 L858 606 L838 580 L812 536 L804 521 L772 472 L741 426 L728 396z" />
        <path d="M1124 427 L1100 446 L1073 456 L1017 489 L993 500 L955 517 L930 528 L897 552 L880 572 L863 590 L812 620 L767 655 L722 672 L698 690 L690 705 L700 700 L724 683 L767 667 L812 634 L862 604 L882 590 L897 568 L925 549 L955 538 L965 530 L993 515 L1017 497 L1050 482 L1073 468 L1100 450 L1124 436z" />
        <path d="M694 690 L667 722 L648 737 L590 758 L547 780 L533 797 h14 L560 784 L595 766 L655 742 L700 702z" />
      </g>
      <path d="M704 797 L750 763 Q759 759 763 767 L774 783 V797z" fill="#a5d8fc" />
      <g fill="none" stroke="#dde1e5" strokeLinejoin="round" strokeLinecap="round">
        {roads.map((r) => <path key={r.d} d={r.d} strokeWidth={r.w + 2} />)}
      </g>
      <g fill="none" stroke="#fff" strokeLinejoin="round" strokeLinecap="round">
        {roads.map((r) => <path key={r.d} d={r.d} strokeWidth={r.w} />)}
      </g>
      <Pin x={443} y={411} tone="blue" glyph="cart" />
      <Pin x={402} y={466} tone="blue" glyph="bag" />
      <Pin x={505} y={500} tone="blue" glyph="bag" />
      <Pin x={491} y={541} tone="grey" glyph="dot" />
      <Pin x={524} y={539} tone="orange" glyph="food" />
      <Pin x={924} y={420} tone="blue" glyph="bag" />
      <Pin x={723} y={573} tone="blue" glyph="bag" />
      <Pin x={858} y={557} tone="orange" glyph="food" />
      <Pin x={530} y={646} tone="blue" glyph="bag" />
      <Pin x={470} y={737} tone="grey" glyph="dot" />
      <Pin x={448} y={788} tone="blue" glyph="bag" />
      <Pin x={791} y={650} tone="orange" glyph="cup" />
      <Pin x={986} y={634} tone="grey" glyph="cap" />
      <Pin x={1112} y={730} tone="grey" glyph="cap" />
      <Pin x={763} y={587} tone="grey" glyph="dot" />
      <g fontFamily="Roboto, 'Noto Sans', sans-serif" stroke="#fff" strokeWidth="2" paintOrder="stroke" strokeLinejoin="round">
        {labels.map(([x, y, t, c, s, anchor = "start", rot]) => (
          <text key={t} x={x} y={y} fill={c} fontSize={s} textAnchor={anchor} transform={rot ? `rotate(${rot} ${x} ${y})` : undefined}>{t}</text>
        ))}
      </g>
      <text x="679" y="599" fontSize="11" fill="#111" fontFamily="Roboto, sans-serif">1 หมู่ 4 ต.ปลายบาง อ.บางกรวย จ.นนทบุรี</text>
      <g transform="translate(768 587)">
        <path d="M-11 -32h22q2 0 2 2v22q0 2-2 2H6L0 0l-6-6h-5q-2 0-2-2v-22q0-2 2-2z" fill="#5cf55a" stroke="#333" />
        <path d="M-7.500 -17.500 0 -24l7.500 6.500-1.200 1.300L5 -17.300V-11H1.500v-4h-3v4H-5v-6.300l-1.300 1.100z" fill="#000" />
        <rect x="3.500" y="-24" width="2" height="4" fill="#000" />
      </g>
    </svg>
  );
}

function MapView() {
  const ctl = "absolute grid place-items-center bg-white";
  return (
    <div className="relative min-h-[300px] flex-1 overflow-hidden border border-[#666] font-[Roboto,'Noto_Sans',sans-serif]">
      <MapArt />
      <div className="absolute top-[10px] left-[10px] flex h-[39px] bg-white text-[18px]">
        <button className="w-[70px] border-r border-[#e6e6e6] text-black">Map</button>
        <button className="w-[98px] text-[#565656]">Satellite</button>
      </div>
      <label className="absolute top-[49px] left-[10px] flex h-[38px] items-center gap-[2px] border-t border-[#e6e6e6] bg-white pr-[10px] pl-[9px] text-[18px] text-black">
        <input type="checkbox" className="size-[14px] appearance-none rounded-[2px] border-2 border-[#222] bg-white" />
        Terrain
      </label>
      <button aria-label="Fullscreen" className={`${ctl} top-[10px] right-[10px] size-10`}>
        <svg viewBox="0 0 18 18" className="size-[18px]" fill="none" stroke="#666" strokeWidth="2.200"><path d="M1 6V1h5M12 1h5v5M17 12v5h-5M6 17H1v-5" /></svg>
      </button>
      <button aria-label="Street View" className={`${ctl} right-[10px] bottom-[137px] size-10`}>
        <svg viewBox="0 0 18 32" className="h-[31px] w-[18px]" fill="#fbb42c" stroke="#b2762a" strokeWidth=".8">
          <path d="M4.500 11h9l3.500 9-2 1.500-2-3.500-.5 13h-3L9 23l-.5 8h-3L5 18l-2 3.500L1 20z" /><circle cx="9" cy="6" r="5" /><path d="M5.500 11.500 9 16l3.500-4.500z" fill="#d98a1f" />
        </svg>
      </button>
      <div className="absolute right-[10px] bottom-[24px] flex flex-col bg-white">
        <button aria-label="Zoom in" className="grid h-10 w-10 place-items-center border-b border-[#e6e6e6]"><svg viewBox="0 0 18 18" className="size-[18px]"><path d="M9 0v18M0 9h18" stroke="#666" strokeWidth="3.600" /></svg></button>
        <button aria-label="Zoom out" className="grid h-10 w-10 place-items-center"><svg viewBox="0 0 18 18" className="size-[18px]"><path d="M0 9h18" stroke="#666" strokeWidth="3.600" /></svg></button>
      </div>
      <div className="absolute bottom-0 left-[6px] text-[21px] leading-[26px]" aria-label="Google">
        <span className="text-[#4285f4]">G</span><span className="text-[#ea4335]">o</span><span className="text-[#fbbc05]">o</span><span className="text-[#4285f4]">g</span><span className="text-[#34a853]">l</span><span className="text-[#ea4335]">e</span>
      </div>
      <div className="absolute right-0 bottom-0 flex h-[14px] items-center gap-3 bg-[#f8f9fa]/90 pr-[6px] pl-[5px] text-[10px] leading-[14px] font-medium text-[#111]">
        <a href="#keys">Keyboard shortcuts</a><span>Map data ©2021</span><a href="#terms">Terms of Use</a><a href="#report">Report a map error</a>
      </div>
    </div>
  );
}

/* ---------- main area ---------- */

const field = "border border-[#5f5f5f] text-center";
const btn = "flex items-center border border-[#adadad] bg-[#e1e1e1] text-[11px] whitespace-nowrap text-[#333]";

function HouseForm() {
  const zones: [string, boolean, string][] = [["1 = ในเขตเทศบาล", true, "w-[118px]"], ["2 = นอกเขตเทศบาล", false, ""]];
  return (
    <section className="h-[117px] border border-[#bdbdbd] bg-[#f0f0f0] text-[11px]">
      <h2 className="flex h-[19px] items-center gap-[6px] bg-[#dcdcdc] pl-[11px]">
        <T s="ข้อมูลบ้านเลขที่ 1 หมู่ 4 " /><Mosaic rows={["cedeccd"]} /><T s="อ.บางกรวย จ.นนทบุรี" />
      </h2>
      <div className="flex items-start pt-[10px] pl-[9px]">
        <label htmlFor="code" className="w-[51px] leading-[28px]">รหัสบ้าน</label>
        <input id="code" defaultValue="75" className={`${field} h-[27px] w-[115px] bg-[#f5f5dc] text-[12px] font-bold`} />
        <label htmlFor="dopa" className="w-[164px] pl-3 leading-[28px] whitespace-nowrap">รหัสบ้านตามกรมการปกครอง</label>
        <div className="relative">
          <input id="dopa" className={`${field} block h-[25px] w-[116px] bg-white text-[12px]`} />
          <span className="pointer-events-none absolute top-0 left-[14px]"><Mosaic rows={["ccccccccccc", "bfdedfecfeb", "abcabcabcba"]} /></span>
        </div>
      </div>
      <div className="flex items-center pt-[8px] pl-[9px]">
        <label htmlFor="owner" className="w-[51px] pl-[3px]">เจ้าบ้าน</label>
        <div className="relative">
          <input id="owner" className={`${field} block h-[27px] w-[190px] bg-[#f5f5dc] text-[12px]`} />
          <span className="pointer-events-none absolute top-[7px] left-[27px]"><Mosaic rows={["kllmlmkkmlmmllmnm", "klkkllkkkllkklkl "]} /></span>
        </div>
        <button aria-label="Search owner" className="ml-[7px] grid h-[26px] w-[31px] place-items-center border border-[#adadad] bg-[#e1e1e1]"><Ico size="size-[19px]">{icons.search}</Ico></button>
        <label htmlFor="loc" className="w-[51px] pl-[17px]">ที่ตั้ง</label>
        <input id="loc" defaultValue="1" className={`${field} h-[25px] w-[30px] bg-[#f5f5dc] text-[12px]`} />
        {zones.map(([t, on, w]) => (
          <label key={t} className={`ml-2 flex items-center gap-[6px] whitespace-nowrap ${w}`}>
            <input type="radio" name="zone" defaultChecked={on} className="size-[13px] appearance-none rounded-full border border-[#333] bg-white shadow-[inset_0_0_0_2px_white] checked:bg-[#222]" />
            <T s={t} />
          </label>
        ))}
      </div>
    </section>
  );
}

const tabs: [string, IconName, string][] = [
  ["ข้อมูลที่ตั้ง", "house", "w-[82px]"],
  ["จำนวนคนในบ้าน [13]", "person", "w-[141px]"],
  ["แผนที่บ้าน", "note", "w-[87px]"],
  ["รูปบ้าน", "photo", "w-[67px]"],
  ["สำรวจลูกน้ำ", "bug", "w-[92px]"],
];

function MapPanel() {
  return (
    <section className="flex min-w-0 flex-1 flex-col">
      <div role="tablist" className="flex h-[24px] items-end pl-[3px] text-[11px] text-black">
        {tabs.map(([t, ic, w], i) => (
          <button key={t} role="tab" aria-selected={i === 2} className={`flex shrink-0 items-center justify-between px-[6px] whitespace-nowrap ${w} ${i === 2 ? "h-[24px] bg-white" : "h-[22px] border border-b-0 border-[#dadada] bg-[#f0f0f0]"}`}>
            <Ico size="size-[14px]">{icons[ic]}</Ico><T s={t} />
          </button>
        ))}
      </div>
      <div className="flex flex-1 flex-col border-r-2 border-b-2 border-[#efefef] bg-white pr-[16px] pb-[14px] pl-[14px]">
        <p className="flex h-[40px] items-center gap-1 pt-[6px] text-[11px]"><T s="บ้านเลขที่ 1" /><Mosaic rows={["bdcddceddccd"]} /><T s="อ.บางกรวย จ.นนทบุรี" /></p>
        <MapView />
        <div className="flex pt-[13px]">
          <button aria-label="Print" className={`${btn} ml-[2px] h-[34px] w-[76px] justify-center`}><Ico size="size-[18px]">{icons.printer}</Ico></button>
          <button className={`${btn} ml-auto h-[34px] w-[106px] gap-[5px] pl-[11px]`}><Ico>{icons.route}</Ico>ดูเส้นทาง</button>
          <button className={`${btn} ml-2 h-[34px] w-[108px] gap-1 pl-[6px]`}><Ico>{icons.floppy}</Ico>บันทึกรูปบ้าน</button>
        </div>
      </div>
      <p className="flex h-[35px] items-start gap-[3px] pt-[5px] text-[11px] leading-[18px] text-[#1414c8]">
        <T s="ปรับปรุงข้อมูลเมื่อ 1 พ.ย. 2559 20:25:07 โดย" /> <span className="pt-[5px]"><Mosaic rows={["qrrqrqqrrrqr"]} /></span>
      </p>
    </section>
  );
}

function Actions() {
  return (
    <div className="flex w-[121px] shrink-0 flex-col pt-[26px] pb-[39px]">
      <button className={`${btn} h-[34px] pl-1`}><Ico size="size-[17px]">{icons.plus}</Ico><span className="flex-1 pr-[14px] text-center">เพิ่มบ้าน</span></button>
      <button className={`${btn} mt-[6px] h-[34px] pl-1`}><Ico size="size-[17px]">{icons.tap}</Ico><span className="flex-1 text-center">ข้อมูลสุขาภิบาล</span></button>
      <button className={`${btn} mt-auto h-[34px] gap-[9px] pl-[13px]`}><Ico>{icons.server}</Ico><T big s="MyData" /></button>
      <Check className="h-[31px] text-[11px] font-bold text-[#dc143c]" text="ยกเลิกข้อมูล" />
      <button className={`${btn} h-[34px] gap-[5px] pl-[18px]`}><Ico>{icons.floppy}</Ico>บันทึกข้อมูล</button>
    </div>
  );
}

/* ---------- status and task bar ---------- */

function StatusBar() {
  return (
    <footer className="flex h-[25px] items-center overflow-hidden border-t border-[#bdbdbd] bg-[#f0f0f0] text-[11px] whitespace-nowrap text-[#333]">
      <span className="w-[175px] pl-[6px]"><T big s="เชื่อมต่อฐานข้อมูล MySQL ได้" /></span>
      <span className="w-[146px]"><T s="MySQL Version : 5.5.27" /></span>
      <span className="w-[110px]"><T s="หน่วยบริการ : รพ.สต.บ" /></span>
      <Mosaic rows={["ccddcbcbcbdcbccccc", "cdcefdefcfdcdbdccc"]} />
      <span className="w-[73px] pl-[3px]"><T s="| ชื่อผู้ใช้งาน :" /></span>
      <Mosaic rows={["bdcedefcfedecdd"]} />
      <span className="pl-[7px] text-[#c00000]"><T s="| นอกเวลาทำการ" /></span>
      <span className="ml-auto pr-[6px]"><T big s="MyPCU SERVER : 2 ก.ย. 2564 22:23:50" /></span>
    </footer>
  );
}

const apps: { name: string; open?: boolean; active?: boolean; art: React.ReactNode }[] = [
  { name: "Start", art: <path d="M4 6.300 11 5.300v6.200H4zM12 5.200 20 4v7.500h-8zM4 12.400h7v6.200l-7-1zM12 12.400h8V20l-8-1.200z" fill="#fff" /> },
  { name: "Search", art: <g fill="none" stroke="#fff" strokeWidth="1.400"><circle cx="13.500" cy="8.500" r="5" /><path d="M10 12.500 3.500 19.500" /></g> },
  { name: "Task view", art: <g fill="none" stroke="#fff" strokeWidth="1.200"><rect x="7" y="6" width="10" height="12" /><path d="M5 7.500H3v9h2M19 7.500h2v9h-2" /></g> },
  { name: "Store", art: <g><path d="M2 7h20l-1 15H3z" fill="#fff" /><path d="M8 8V5c0-4 8-4 8 0v3M6 8V4.500M11 3c2-2 7-1 7 2v3" fill="none" stroke="#fff" strokeWidth="1.300" /><path d="M7 11l4-.6v3.800H7zM12 10.300l5-.7v4.600h-5zM7 15h4v3.800L7 18.200zM12 15h5v4.600l-5-.7z" fill="#000" /></g> },
  { name: "Edge", art: <path d="M2 12C2 5 6.500 1.500 12 1.500S22 5.500 22 11v2.600H8.600c.3 3.400 3.400 4.600 6.400 4.600 2 0 4-.5 5.600-1.500v4.200c-2 1-4.300 1.600-6.800 1.600-6 0-9.900-3.400-9.900-8.400 0-3.300 1.700-5.700 4.300-7C4.800 8 3 9.600 2 12zm6.700-2.200h7.700C16.400 7 15 5.600 12.700 5.600c-2.300 0-3.700 1.600-4 4.200z" fill="#0078d7" /> },
  { name: "Explorer", art: <g><path d="M2 3h8l1.500 2H22v16H2z" fill="#f8d775" /><path d="M2 7h20v14H2z" fill="#fde49b" /><path d="M6 21v-7q0-1 1-1h10q1 0 1 1v7h-3.500v-4h-5v4z" fill="#33b0e0" /></g> },
  { name: "Statistics", open: true, art: <g><circle cx="12" cy="12" r="11.300" fill="#5b0a5c" stroke="#e8d8e8" strokeWidth="1.200" /><path d="M6.500 19v-5M10.500 19v-6M14 19V9M17.500 18V5" stroke="#fff" strokeWidth="2.300" /><path d="M2 5l9 6 3 3" stroke="#fff" fill="none" /></g> },
  { name: "TeamViewer", open: true, art: <g><rect width="24" height="24" rx="1.500" fill="#0f75dc" /><circle cx="12" cy="12" r="9.500" fill="#fff" /><path d="M3.500 12 9 8.500v2.300h6V8.500l5.500 3.500-5.500 3.500v-2.300H9v2.300z" fill="#0f75dc" /></g> },
  { name: "Chrome", open: true, art: <g><circle cx="12" cy="12" r="11" fill="#fbc116" /><path d="M12 12 2.500 6.500A11 11 0 0 1 21.500 6.500z" fill="#e33b2e" /><path d="M12 1a11 11 0 0 1 9.500 6H12z" fill="#e33b2e" /><path d="M2.500 6.500A11 11 0 0 0 11 23l4.500-8.500L12 12z" fill="#2da94f" /><circle cx="12" cy="12" r="5.400" fill="#fff" /><circle cx="12" cy="12" r="4.200" fill="#4a8af4" /></g> },
  { name: "MyPCU", open: true, active: true, art: <g><path d="M3 4l18-2v20L3 20z" fill="#2a6ea4" /><circle cx="12" cy="12" r="6.500" fill="none" stroke="#d9ecf8" /><path d="M9 15v-3M11.500 15v-5M14 15v-3.500M16 15V8" stroke="#fff" strokeWidth="1.500" /></g> },
];

function TaskBar() {
  return (
    <footer className="flex h-10 items-stretch bg-black text-[11px] text-white">
      {apps.map((a) => (
        <button key={a.name} aria-label={a.name} className={`flex w-[49px] shrink-0 flex-col items-center ${a.active ? "bg-[#333]" : ""}`}>
          <svg viewBox="0 0 24 24" className="mt-2 size-6">{a.art}</svg>
          {a.open && <span className={`mt-auto h-[2px] bg-[#76b9ed] ${a.active ? "w-full" : "w-[41px]"}`} />}
        </button>
      ))}
      <div className="ml-auto flex items-center gap-2 pr-[15px]">
        <svg viewBox="0 0 16 16" className="size-4"><path d="M1 6h2.500L7 2.500v11L3.500 10H1z" fill="none" stroke="#fff" /><circle cx="11.500" cy="11" r="4" fill="#d32f2f" /><path d="M9.800 9.300l3.400 3.400M13.200 9.300l-3.400 3.400" stroke="#fff" strokeWidth="1.200" /></svg>
        <svg viewBox="0 0 16 16" className="size-4" fill="none" stroke="#fff"><rect x="3.500" y="3.500" width="12" height="7.500" /><path d="M9.500 11v3M6 14.500h7M.5 1.500h3v4h-3zM2 5.500V14.500h3" /></svg>
        <svg viewBox="0 0 16 16" className="size-4"><path d="M.5 1h15v11H9l-3 3.500V12H.5z" fill="#fff" /><path d="M3 4h10M3 6.500h10M3 9h10" stroke="#000" /></svg>
        <span className="w-[33px] text-right">ENG</span>
        <time className="ml-2 text-center leading-[17px]">22:23<br />02/09/2564</time>
      </div>
    </footer>
  );
}

export default function App() {
  return (
    <div className="relative flex min-h-screen min-w-[1240px] flex-col bg-[#f0f0f0] font-['Noto_Sans','Open_Sans',sans-serif] text-[#444]">
      <TitleBar />
      <MenuTabs />
      <Ribbon />
      <div className="flex h-7 items-end border-b border-[#bdbdbd] pl-px">
        <div className="flex h-[26px] w-[165px] items-center justify-between border border-b-0 border-[#bdbdbd] bg-[#f0f0f0] pr-2 pl-[11px] text-[11px] whitespace-nowrap text-[#222]">
          <T big s="ข้อมูลครัวเรือน [HOME]" />
          <button aria-label="Close tab"><svg viewBox="0 0 9 9" className="size-2" stroke="#555" strokeWidth="1.500"><path d="M.5.500l8 8M8.500.500l-8 8" /></svg></button>
        </div>
      </div>
      <main className="relative mx-px flex flex-1 border-x border-b border-[#bdbdbd] bg-[#dcdcdc] pt-[13px] pr-2 pl-[6px]">
        <LeftPanel />
        <div className="grid w-[23px] shrink-0 place-items-center">
          <svg viewBox="0 0 2 14" className="h-[14px] w-[2px]"><path d="M1 0v14" stroke="#666" strokeWidth="2" strokeDasharray="2 2" /></svg>
        </div>
        <div className="flex min-w-0 flex-1 flex-col">
          <HouseForm />
          <div className="flex flex-1 gap-2 pt-[6px]">
            <MapPanel />
            <Actions />
          </div>
        </div>
        <a href="#remote" aria-label="Remote session" className="absolute top-[267px] -right-[2px] block h-[46px] w-[25px]">
          <svg viewBox="0 0 25 46" className="h-[46px] w-[25px]"><path d="M25 0H3Q0 0 0 3v30l25 13z" fill="#fff" /><rect x="3" y="5" width="21" height="19" fill="#1690dc" /><circle cx="13.500" cy="14.500" r="8.700" fill="#fff" /><path d="M6.500 14.500 10.500 11v2.500h6V11l4 3.500-4 3.500v-2.500h-6V18z" fill="#1a73e0" /></svg>
        </a>
      </main>
      <StatusBar />
      <TaskBar />
    </div>
  );
}
